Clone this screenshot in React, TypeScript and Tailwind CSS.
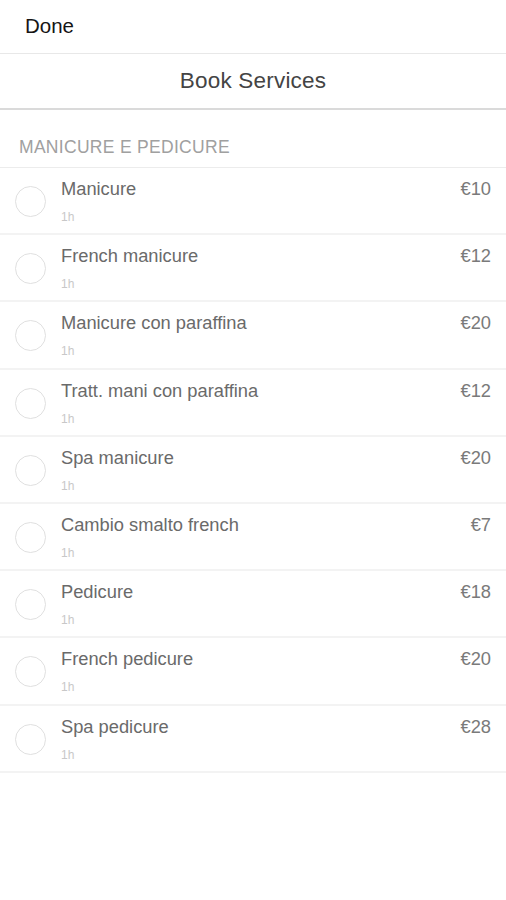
import React from "react";

const services: [string, string][] = [
  ["Manicure", "€10"],
  ["French manicure", "€12"],
  ["Manicure con paraffina", "€20"],
  ["Tratt. mani con paraffina", "€12"],
  ["Spa manicure", "€20"],
  ["Cambio smalto french", "€7"],
  ["Pedicure", "€18"],
  ["French pedicure", "€20"],
  ["Spa pedicure", "€28"],
];

export default function App() {
  return (
    <div
      className="w-[506px] h-[900px] bg-white overflow-hidden"
      style={{ fontFamily: '"Liberation Sans", Arial, sans-serif' }}
    >
      <div className="h-[54px] flex items-center pl-[25px] border-b border-[#e8e8e8]">
        <span className="text-[20.5px] text-[#151515]">Done</span>
      </div>
      <div className="h-[56px] flex items-center justify-center border-b-2 border-[#dadada]">
        <span className="text-[22.5px] text-[#444] tracking-[0.2px]">Book Services</span>
      </div>
      <div className="h-[58px] flex items-end pl-[19px] pb-[7px] border-b border-[#ececec]">
        <span className="text-[17.5px] text-[#a0a0a0] tracking-[0.3px]">MANICURE E PEDICURE</span>
      </div>
      {services.map(([name, price]) => (
        <div
          key={name}
          className="h-[67.2px] flex border-b-2 border-[#f3f3f3]"
        >
          <div className="w-[61px] flex items-start pl-[15px] pt-[18px]">
            <div className="w-[31px] h-[31px] rounded-full border border-[#e0e0e0]" />
          </div>
          <div className="flex-1 flex flex-col pt-[10px]">
            <span className="text-[18.3px] leading-[22px] text-[#6a6a6a]">{name}</span>
            <span className="text-[12px] leading-[14px] mt-[10px] text-[#c8c8c8]">1h</span>
          </div>
          <div className="pr-[15px] pt-[10px]">
            <span className="text-[18.3px] leading-[22px] text-[#7a7a7a]">{price}</span>
          </div>
        </div>
      ))}
    </div>
  );
}
